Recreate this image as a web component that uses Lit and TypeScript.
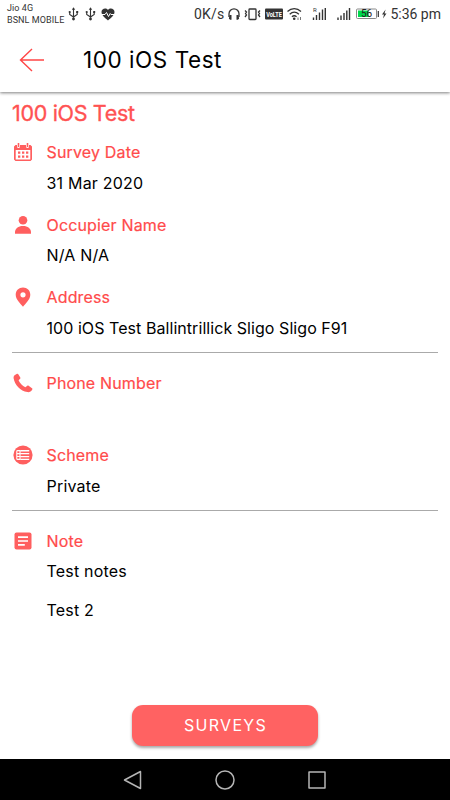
import { LitElement, html, svg, css, nothing } from "lit";
import { customElement, property } from "lit/decorators.js";

const icons: Record<string, unknown> = {
  calendar: svg`<path fill-rule="evenodd" d="M2.500 3H4v1.600a1.500 1.500 0 0 0 3 0V3h6v1.600a1.500 1.500 0 0 0 3 0V3h1.500L19 4.500V17.500L17.500 19H2.500L1 17.500V4.500zM2.700 8v9.400h14.600V8z"/><path d="M4.700 1h1.600v4H4.700zM13.700 1h1.600v4h-1.600zM5 9.500h2.300v2.300H5zM9 9.500h2.300v2.300H9zM13 9.500h2.300v2.300H13zM5 13.500h2.300v2.300H5zM9 13.500h2.300v2.300H9zM13 13.500h2.300v2.300H13z"/>`,
  person: svg`<circle cx="10" cy="5.300" r="4.300"/><path d="M2 18.800v-1.500c0-3.800 3.200-6.400 8-6.400s8 2.600 8 6.400v1.500z"/>`,
  pin: svg`<path fill-rule="evenodd" d="M10 .6c-4.100 0-7.300 3.100-7.300 7.100 0 4.900 4.700 8.600 7.300 12 2.600-3.400 7.300-7.100 7.300-12C17.300 3.700 14.100.6 10 .6zM10 5.200a2.600 2.600 0 1 1 0 5.200 2.600 2.600 0 0 1 0-5.200z"/>`,
  phone: svg`<path d="M1.600 2.300 4 .8c.5-.3 1-.1 1.300.4l2 3.300c.3.5.2.9-.2 1.300L5.600 7.200c1 2.700 3.800 5.700 6.800 7l1.900-1.400c.4-.3.9-.3 1.300 0l3.400 2.400c.5.4.6.8.3 1.300-1.200 2-2.900 3-5 2.600C7.600 18 1.500 11.500.6 5.200c-.1-1.200.2-2.200 1-2.900z"/>`,
  list: svg`<circle cx="10" cy="10" r="9.600"/><g fill="none" stroke="#fff" stroke-width="1.100"><path d="M7 5.600H4.500Q3.800 5.600 3.800 6.300v7.400q0 .7.700.7H7M3.800 8.600H7M3.800 11.500H7M7 5.600v8.800"/></g><path d="M7.200 5.100h9v1.300h-9zM7.200 8h9v1.300h-9zM7.200 10.900h9v1.300h-9zM7.200 13.700h9V15h-9z" fill="#fff"/>`,
  note: svg`<rect x="1.500" y="1.500" width="17" height="17" rx="2"/><path d="M5 6.200h10M5 10h10M5 13.800h6.800" stroke="#fff" stroke-width="1.700" fill="none"/>`,
};

@customElement("status-bar")
export class StatusBar extends LitElement {
  static styles = css`
    :host { display: flex; align-items: center; box-sizing: border-box; height: 28px; flex: none; padding: 0 9px 0 7px; font-family: Roboto, sans-serif; color: #333; white-space: nowrap; }
    .carrier { width: 61px; flex: none; font-size: 9px; line-height: 12px; letter-spacing: .08px; }
    .carrier span { display: block; }
    .speed { width: 34px; flex: none; margin-left: 78px; font-size: 14px; letter-spacing: .2px; }
    .time { flex: none; margin-left: auto; font-size: 14px; }
    svg { display: block; flex: none; overflow: visible; }
    .usb { margin-right: 6px; }
    .bolt { margin-left: 2px; }
    .mini { font: 700 8px Roboto, sans-serif; }
  `;
  private usb() {
    return html`<svg class="usb" width="11" height="14" viewBox="0 0 11 14" fill="none" stroke="#333" stroke-width="1.100"><path d="M5.500 2v9M1.700 5v2.500L5.500 10 9.200 7.500V5"/><path d="m5.500.3 1.700 2.500H3.800z" fill="#333" stroke="none"/><circle cx="5.500" cy="12" r="1.400" fill="#333" stroke="none"/><circle cx="1.700" cy="5" r="1.100" fill="#333" stroke="none"/><path d="M8.200 4h2v2h-2z" fill="#333" stroke="none"/></svg>`;
  }
  render() {
    return html`
      <div class="carrier"><span>Jio 4G</span><span>BSNL MOBILE</span></div>
      ${this.usb()}${this.usb()}
      <svg width="14" height="13" viewBox="0 0 14 13"><path d="M6 12.500C3.500 10.200-.5 7.400-.5 4-.5.500 4-.8 6 2c2-2.800 6.500-1.500 6.500 2 0 3.400-4 6.200-6.500 8.500z" fill="#333"/><path d="M-.5 6.500H3L4.500 4.500l2 4 1.700-3 .8 1h3.500" stroke="#fff" fill="none"/></svg>
      <span class="speed">0K/s</span>
      <svg width="106" height="16" viewBox="228 6 106 16">
        <g fill="none" stroke="#333" stroke-width="1.300">
          <path d="M229 17v-3.200a5 5 0 0 1 10 0V17"/>
          <rect x="249" y="9" width="7" height="10.500" rx=".8"/>
          <path d="m245 10.500 1.500 1.500-1 1.500 1 1.500-1.500 2M260 10.500l-1.500 1.500 1 1.500-1 1.500 1.500 2"/>
          <path d="M287.500 11.500c4-3.800 9.500-3.800 13.500 0M289.700 14.200c2.800-2.600 6.300-2.600 9.200 0M291.900 16.700c1.500-1.200 3.200-1.200 4.700 0"/>
        </g>
        <path d="M229.500 15h2v4.700h-1.300l-1.300-1zM236.500 15h2l.6 3.700-1.300 1h-1.300z" fill="#333"/>
        <rect x="265" y="8.500" width="18" height="11" rx="1" fill="#333"/>
        <text class="mini" x="266.200" y="17" textLength="15.700" lengthAdjust="spacingAndGlyphs" fill="#fff">VoLTE</text>
        <circle cx="294.200" cy="18.800" r="1.300" fill="#333"/>
        <path d="M298 17.500v2.500M300.500 17v3" stroke="#777"/>
        <path d="M313.500 20v-2.500M316.500 20v-5M319.500 20v-7.500M322.500 20V9.500M325.300 20V8" stroke="#333" stroke-width="1.400"/>
        <text x="313" y="12" font-size="6" fill="#333">R</text>
      </svg>
      <svg width="46" height="16" viewBox="334 6 46 16">
        <path d="M338 20v-2.500M341 20v-4.500M344 20v-7M346.800 20v-9.500M349.500 20V8" stroke="#333" stroke-width="1.400"/>
        <rect x="356.500" y="9" width="20" height="9.500" rx="1" fill="#fff" stroke="#888"/>
        <rect x="358" y="10.500" width="10.500" height="6.500" fill="#00d84d"/>
        <text x="361" y="17.200" font-size="10" fill="#222">56</text>
        <path d="M378.300 11v6" stroke="#333" stroke-width="1.200"/>
      </svg>
      <svg class="bolt" width="6" height="10" viewBox="0 0 6 10"><path d="M3.600.5 0 5.500h2L1 9.500l3.500-5h-2z" fill="#333"/></svg>
      <span class="time">5:36 pm</span>`;
  }
}

@customElement("detail-row")
export class DetailRow extends LitElement {
  @property() icon = "";
  @property() label = "";
  @property({ attribute: false }) values: string[] = [];
  static styles = css`
    :host { display: grid; grid-template-columns: 34.500px 1fr; grid-auto-rows: 30.500px; align-items: center; color: #000; font-size: 16px; letter-spacing: .2px; white-space: nowrap; }
    :host([long]) { letter-spacing: .06px; }
    svg { width: 20px; height: 20px; margin-left: 1px; fill: #ff5f5f; }
    .label { color: #ff4b4b; font-size: 16px; font-weight: 400; letter-spacing: .16px; -webkit-text-stroke: .2px #ff4b4b; }
    .value { grid-column: 2; }
    .value + .value { padding-top: 17px; }
  `;
  render() {
    return html`<svg viewBox="0 0 20 20">${icons[this.icon] ?? nothing}</svg>
      <span class="label">${this.label}</span>
      ${this.values.map((v) => html`<span class="value">${v}</span>`)}`;
  }
}

@customElement("app-root")
export class AppRoot extends LitElement {
  static styles = css`
    :host { display: flex; flex-direction: column; width: 450px; height: 800px; overflow: hidden; background: #fff; font-family: Inter, sans-serif; }
    header { display: flex; align-items: center; box-sizing: border-box; height: 64px; flex: none; padding: 0 0 1px 19px; box-shadow: 0 1px 3px rgba(0,0,0,.5); clip-path: inset(0 0 -8px 0); }
    .back { width: 26px; height: 24px; margin-right: 38px; fill: none; stroke: #ff4545; stroke-width: 1.400; }
    h1 { margin: 0; font-size: 22.500px; font-weight: 400; letter-spacing: .55px; }
    main { flex: 1; padding: 0 12px; }
    h2 { margin: 0; height: 45px; line-height: 42px; font-size: 21.500px; font-weight: 400; letter-spacing: -.32px; color: #ff5252; -webkit-text-stroke: .35px #ff5252; }
    .group { display: grid; grid-auto-rows: 61px; gap: 11.500px; padding-bottom: 9px; }
    .group + .group { border-top: 1px solid #aaa; padding-top: 14.500px; }
    .button { align-self: center; width: 186px; height: 41px; margin-bottom: 13px; flex: none; border: 0; border-radius: 11px; padding: 0 0 2px 1px; background: #ff6262; color: #fff; font: 400 16px Inter, sans-serif; letter-spacing: 1.300px; box-shadow: 0 2px 3px rgba(0,0,0,.35); }
    nav { display: flex; align-items: center; justify-content: space-between; box-sizing: border-box; height: 41px; flex: none; padding: 0 123px; background: #000; }
    nav svg { width: 20px; height: 20px; fill: none; stroke: #b5b5b5; stroke-width: 1.500; stroke-linejoin: round; }
  `;
  render() {
    return html`
      <status-bar></status-bar>
      <header>
        <svg class="back" viewBox="0 0 26 24"><path d="M25 12H1.500M13 1 1.500 12 13 23"/></svg>
        <h1>100 iOS Test</h1>
      </header>
      <main>
        <h2>100 iOS Test</h2>
        <section class="group">
          <detail-row icon="calendar" label="Survey Date" .values=${["31 Mar 2020"]}></detail-row>
          <detail-row icon="person" label="Occupier Name" .values=${["N/A N/A"]}></detail-row>
          <detail-row icon="pin" label="Address" long .values=${["100 iOS Test Ballintrillick Sligo Sligo F91"]}></detail-row>
        </section>
        <section class="group">
          <detail-row icon="phone" label="Phone Number"></detail-row>
          <detail-row icon="list" label="Scheme" .values=${["Private"]}></detail-row>
        </section>
        <section class="group">
          <detail-row icon="note" label="Note" .values=${["Test notes", "Test 2"]}></detail-row>
        </section>
      </main>
      <button class="button">SURVEYS</button>
      <nav>
        <svg viewBox="0 0 20 20"><path d="M17.500 1.500v17L1.500 10z"/></svg>
        <svg viewBox="0 0 20 20"><circle cx="10" cy="10" r="9"/></svg>
        <svg viewBox="0 0 20 20"><rect x="2" y="2" width="16" height="16"/></svg>
      </nav>`;
  }
}
